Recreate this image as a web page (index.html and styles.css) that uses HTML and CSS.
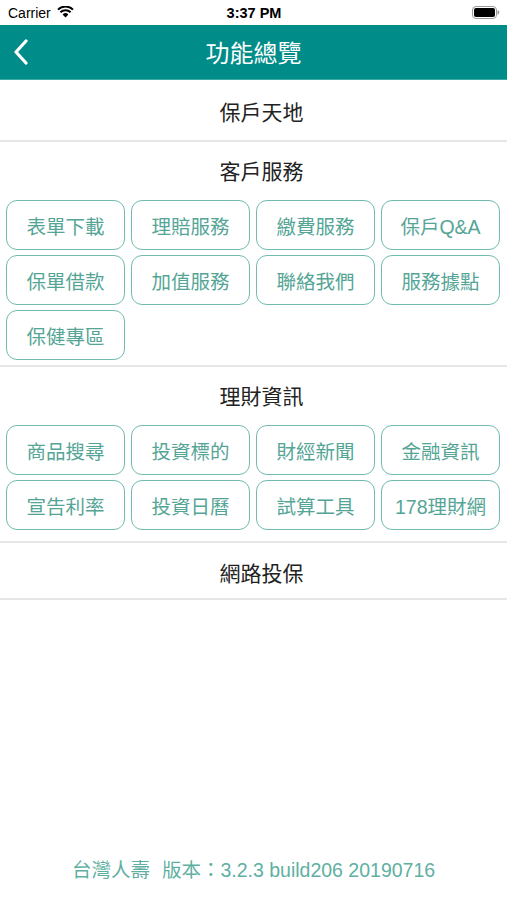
FILE: index.html
```html
<!DOCTYPE html>
<html lang="zh-Hant">
<head>
<meta charset="utf-8">
<title>功能總覽</title>
<link rel="stylesheet" href="styles.css">
</head>
<body>
<div class="screen">
  <div class="status">
    <div class="status-left">
      <span class="carrier">Carrier</span>
      <svg class="wifi" width="17" height="12" viewBox="0 0 17 12">
        <path d="M8.5 11.5 L5.6 8.4 A4.2 4.2 0 0 1 11.4 8.4 Z" fill="#000"/>
        <path d="M3.4 6.2 A7.4 7.4 0 0 1 13.6 6.2" stroke="#000" stroke-width="2" fill="none"/>
        <path d="M1 3.6 A10.8 10.8 0 0 1 16 3.6" stroke="#000" stroke-width="2" fill="none"/>
      </svg>
    </div>
    <div class="status-time">3:37 PM</div>
    <div class="status-right">
      <svg width="28" height="13" viewBox="0 0 28 13">
        <rect x="0.5" y="0.5" width="24" height="12" rx="3.5" fill="none" stroke="#999" stroke-width="1"/>
        <rect x="2" y="2" width="21" height="9" rx="2" fill="#000"/>
        <rect x="25.5" y="4.5" width="1.6" height="4" rx="0.8" fill="#999"/>
      </svg>
    </div>
  </div>
  <header class="navbar">
    <svg class="back" width="16" height="26" viewBox="0 0 16 26">
      <path d="M13 2 L3 13 L13 24" stroke="#fff" stroke-width="3.2" fill="none" stroke-linecap="round" stroke-linejoin="round"/>
    </svg>
    <h1 class="nav-title">功能總覽</h1>
  </header>

  <div class="single-row">保戶天地</div>

  <section class="section sec-a">
    <div class="section-title">客戶服務</div>
    <div class="grid">
      <div class="btn">表單下載</div>
      <div class="btn">理賠服務</div>
      <div class="btn">繳費服務</div>
      <div class="btn">保戶Q&amp;A</div>
      <div class="btn">保單借款</div>
      <div class="btn">加值服務</div>
      <div class="btn">聯絡我們</div>
      <div class="btn">服務據點</div>
      <div class="btn">保健專區</div>
    </div>
  </section>

  <section class="section sec-b">
    <div class="section-title">理財資訊</div>
    <div class="grid">
      <div class="btn">商品搜尋</div>
      <div class="btn">投資標的</div>
      <div class="btn">財經新聞</div>
      <div class="btn">金融資訊</div>
      <div class="btn">宣告利率</div>
      <div class="btn">投資日曆</div>
      <div class="btn">試算工具</div>
      <div class="btn">178理財網</div>
    </div>
  </section>

  <div class="single-row net">網路投保</div>

  <footer class="footer">台灣人壽<span class="gap"></span>版本：3.2.3 build206 20190716</footer>
</div>
</body>
</html>
```

FILE: styles.css
```css
html, body {
  margin: 0;
  padding: 0;
  background: #fff;
}
.screen {
  width: 507px;
  height: 900px;
  display: flex;
  flex-direction: column;
  font-family: "Liberation Sans", "Noto Sans CJK TC", "Noto Sans", sans-serif;
  overflow: hidden;
}
.status {
  height: 25px;
  display: grid;
  grid-template-columns: 1fr auto 1fr;
  align-items: center;
  padding: 0 7px 0 8px;
  font-family: "Liberation Sans", "Noto Sans", sans-serif;
  font-size: 14px;
  color: #000;
}
.status-left {
  display: flex;
  align-items: center;
  gap: 6px;
}
.wifi { margin-top: -2px; }
.status-time {
  font-weight: bold;
  font-size: 14.5px;
}
.status-right {
  display: flex;
  justify-content: flex-end;
  align-items: center;
}
.navbar {
  height: 55px;
  background: #008c89;
  display: flex;
  align-items: center;
  justify-content: center;
  position: relative;
  border-bottom: 1px solid #39a9a4;
  box-sizing: border-box;
}
.back {
  position: absolute;
  left: 13px;
  top: 14px;
}
.nav-title {
  margin: 0;
  font-weight: normal;
  font-size: 24px;
  color: #fff;
  padding-bottom: 1px;
}
.single-row {
  height: 62px;
  display: flex;
  align-items: center;
  justify-content: center;
  font-size: 21px;
  color: #222;
  border-bottom: 2px solid #e6e6e6;
  padding: 2px 0 0 16px;
  box-sizing: border-box;
}
.single-row.net {
  height: 57px;
}
.section {
  border-bottom: 2px solid #e6e6e6;
}
.sec-a { padding-bottom: 5px; }
.sec-b { padding-bottom: 11px; }
.section-title {
  height: 58px;
  display: flex;
  align-items: center;
  justify-content: center;
  font-size: 21px;
  color: #222;
  padding: 0 0 2px 16px;
  box-sizing: border-box;
}
.grid {
  display: grid;
  grid-template-columns: repeat(4, 119px);
  grid-auto-rows: 50px;
  gap: 5px 6px;
  padding: 0 6px;
}
.btn {
  border: 1.5px solid #72bbb0;
  border-radius: 11px;
  display: flex;
  align-items: center;
  justify-content: center;
  font-size: 19.5px;
  color: #55a596;
  box-sizing: border-box;
}
.footer {
  margin-top: auto;
  height: 50px;
  padding-top: 9px;
  box-sizing: border-box;
  text-align: center;
  font-size: 19.5px;
  color: #5fb0a3;
  line-height: 22px;
}
.gap {
  display: inline-block;
  width: 12px;
}
```
